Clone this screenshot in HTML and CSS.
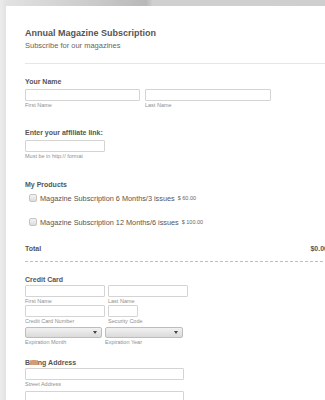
FILE: index.html
```html
<!DOCTYPE html>
<html lang="en">
<head>
    <meta charset="utf-8">
    <title>Annual Magazine Subscription</title>
    <link rel="stylesheet" href="styles.css">
</head>
<body>
<div class="page">
    <form class="card">
        <div class="header">
            <h1 class="title">Annual Magazine Subscription</h1>
            <div class="subtitle">Subscribe for our magazines</div>
        </div>

        <div class="section name-section">
            <div class="label">Your Name</div>
            <div class="row">
                <div class="field">
                    <input type="text" class="input w-first">
                    <div class="sub">First Name</div>
                </div>
                <div class="field">
                    <input type="text" class="input w-last">
                    <div class="sub">Last Name</div>
                </div>
            </div>
        </div>

        <div class="section link-section">
            <div class="label">Enter your affiliate link:</div>
            <input type="text" class="input w-link">
            <div class="sub">Must be in http:// format</div>
        </div>

        <div class="section products">
            <div class="label">My Products</div>
            <div class="product">
                <span class="check"></span>
                <span class="pname">Magazine Subscription 6 Months/3 issues</span>
                <span class="price">$ 60.00</span>
            </div>
            <div class="product">
                <span class="check"></span>
                <span class="pname">Magazine Subscription 12 Months/6 issues</span>
                <span class="price">$ 100.00</span>
            </div>
        </div>

        <div class="total">
            <span>Total</span>
            <span>$0.00</span>
        </div>

        <div class="section cc">
            <div class="label">Credit Card</div>
            <div class="row">
                <div class="field">
                    <input type="text" class="input w-cc">
                    <div class="sub">First Name</div>
                </div>
                <div class="field">
                    <input type="text" class="input w-cc">
                    <div class="sub">Last Name</div>
                </div>
            </div>
            <div class="row">
                <div class="field">
                    <input type="text" class="input w-cc">
                    <div class="sub">Credit Card Number</div>
                </div>
                <div class="field">
                    <input type="text" class="input w-code">
                    <div class="sub">Security Code</div>
                </div>
            </div>
            <div class="row">
                <div class="field">
                    <div class="select w-month"><span class="arrow"></span></div>
                    <div class="sub">Expiration Month</div>
                </div>
                <div class="field">
                    <div class="select w-year"><span class="arrow"></span></div>
                    <div class="sub">Expiration Year</div>
                </div>
            </div>
        </div>

        <div class="section billing">
            <div class="label">Billing Address</div>
            <input type="text" class="input w-addr">
            <div class="sub">Street Address</div>
            <input type="text" class="input w-addr">
        </div>
    </form>
</div>
</body>
</html>
```

FILE: styles.css
```css
html {
    overflow: hidden;
}

body {
    margin: 0;
    padding: 0;
    overflow: hidden;
    width: 325px;
    height: 400px;
    font-family: "Liberation Sans", Arial, sans-serif;
    background: linear-gradient(90deg, #ececec 0, #e2e2e2 6px, #c9c9c9 30%, #b8b8b8 45%, #d0d0d0 47%, #cfcfcf 100%);
}

.page {
    padding: 6px 0 0 6px;
}

.card {
    background: #fff;
    width: 345px;
    height: 420px;
    padding: 21px 0 0 19px;
    box-sizing: border-box;
    color: #555555;
}

.header {
    width: 326px;
    border-bottom: 1px solid #e6e6e6;
    padding-bottom: 12px;
}

.title {
    margin: 0;
    font-size: 9px;
    line-height: 13px;
    font-weight: bold;
    color: #555555;
}

.subtitle {
    font-size: 7.5px;
    line-height: 10px;
    margin-top: 1px;
    color: #666666;
}

.label {
    font-size: 7px;
    line-height: 10px;
    font-weight: bold;
    color: #555555;
}

.sub {
    font-size: 5.5px;
    line-height: 8px;
    color: #8f8f8f;
}

.row {
    display: flex;
    gap: 4px;
}

.input {
    display: block;
    margin: 0;
    padding: 0;
    height: 12px;
    box-sizing: border-box;
    border: 1px solid #d4d4d4;
    background: #fff;
    border-radius: 1px;
}

.w-first { width: 115px; }
.w-last { width: 126px; }
.w-link { width: 80px; }
.w-cc { width: 80px; }
.w-code { width: 30px; }
.w-addr { width: 159px; }
.w-month { width: 77px; }
.w-year { width: 78px; }

.name-section {
    margin-top: 13px;
}

.name-section .row {
    margin-top: 2px;
    gap: 5px;
}

.link-section {
    margin-top: 19px;
}

.link-section .input {
    margin-top: 2px;
}

.products {
    margin-top: 20px;
}

.product {
    display: flex;
    align-items: center;
    margin-top: 3px;
    height: 10px;
}

.product + .product {
    margin-top: 14px;
}

.check {
    width: 6px;
    height: 6px;
    margin: 0 3px 0 4px;
    border: 1px solid #c4c4c4;
    border-radius: 2px;
    background: linear-gradient(#f4f4f4, #dcdcdc);
}

.pname {
    font-size: 7.3px;
    color: #555555;
}

.price {
    font-size: 5.5px;
    color: #666666;
    margin-left: 3px;
}

.total {
    display: flex;
    justify-content: space-between;
    width: 303px;
    margin-top: 17px;
    padding-bottom: 7px;
    border-bottom: 1px dashed #bdbdbd;
    font-size: 7px;
    line-height: 10px;
    font-weight: bold;
    color: #555555;
}

.cc {
    margin-top: 13px;
}

.cc .row {
    gap: 3px;
}

.select {
    position: relative;
    height: 11px;
    box-sizing: border-box;
    border: 1px solid #bdbdbd;
    border-radius: 2px;
    background: linear-gradient(#f2f2f2, #dadada);
    margin-top: 2px;
}

.arrow {
    position: absolute;
    right: 4px;
    top: 3px;
    border-left: 2px solid transparent;
    border-right: 2px solid transparent;
    border-top: 3px solid #444;
}

.billing {
    margin-top: 12px;
}

.billing .sub {
    margin-top: 0;
    margin-bottom: 3px;
}
```
